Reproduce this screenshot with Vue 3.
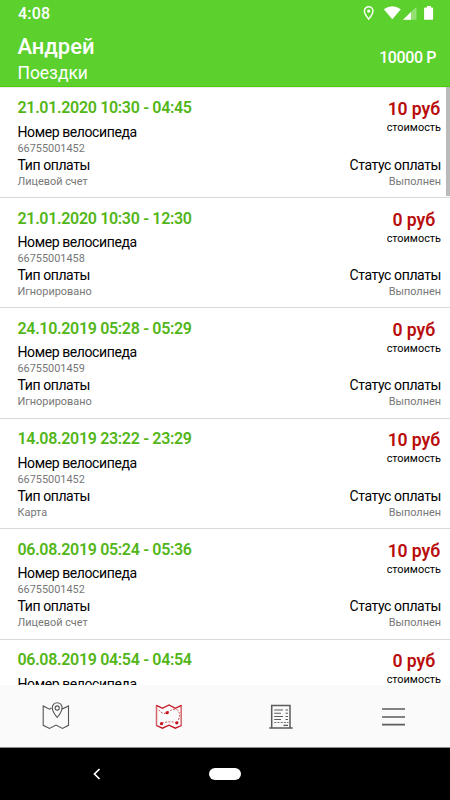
<script setup>
const trips = [
  { time: '21.01.2020 10:30 - 04:45', bike: '66755001452', payment: 'Лицевой счет', price: 10 },
  { time: '21.01.2020 10:30 - 12:30', bike: '66755001458', payment: 'Игнорировано', price: 0 },
  { time: '24.10.2019 05:28 - 05:29', bike: '66755001459', payment: 'Игнорировано', price: 0 },
  { time: '14.08.2019 23:22 - 23:29', bike: '66755001452', payment: 'Карта', price: 10 },
  { time: '06.08.2019 05:24 - 05:36', bike: '66755001452', payment: 'Лицевой счет', price: 10 },
]
const partial = { time: '06.08.2019 04:54 - 04:54', price: 0 }
</script>

<template>
  <div class="screen">
    <header class="header">
      <div class="status">
        <span class="clock">4:08</span>
        <svg class="status-icons" width="74" height="18" viewBox="0 0 74 18">
          <path d="M5.7 1.8a4.3 4.3 0 0 0-4.3 4.3c0 3.1 4.3 8 4.3 8s4.3-4.9 4.3-8a4.3 4.3 0 0 0-4.3-4.3z" fill="none" stroke="#fff" stroke-width="1.4" />
          <circle cx="5.7" cy="6.1" r="1.6" fill="#fff" />
          <path d="M20.8 4.3Q29.3-1.8 37.8 4.3L29.3 14.2z" fill="#fff" />
          <path d="M53.5 1.7V14.7H40z" fill="#fff" opacity=".35" />
          <path d="M48 7V14.7H40z" fill="#fff" />
          <path d="M62 2.4h2V1h4v1.4h1.2q.9 0 .9.9v10.6q0 .9-.9.9H62q-.9 0-.9-.9V3.3q0-.9.9-.9z" fill="#fff" />
        </svg>
      </div>
      <div class="heading">
        <div>
          <h1 class="name">Андрей</h1>
          <div class="subtitle">Поездки</div>
        </div>
        <div class="balance">10000 Р</div>
      </div>
    </header>

    <main class="list">
      <article v-for="trip in trips" :key="trip.time" class="trip">
        <div class="details">
          <div class="time">{{ trip.time }}</div>
          <div class="label">Номер велосипеда</div>
          <div class="value">{{ trip.bike }}</div>
          <div class="label">Тип оплаты</div>
          <div class="value">{{ trip.payment }}</div>
        </div>
        <div class="side">
          <div class="cost">
            <div class="price">{{ trip.price }} руб</div>
            <div class="caption">стоимость</div>
          </div>
          <div class="state">
            <div class="label">Статус оплаты</div>
            <div class="value">Выполнен</div>
          </div>
        </div>
      </article>
      <article class="trip">
        <div class="details">
          <div class="time">{{ partial.time }}</div>
          <div class="label">Номер велосипеда</div>
        </div>
        <div class="side">
          <div class="cost">
            <div class="price">{{ partial.price }} руб</div>
            <div class="caption">стоимость</div>
          </div>
        </div>
      </article>
      <div class="scrollbar"></div>
    </main>

    <nav class="tabs">
      <div class="tab">
        <svg width="30" height="30" viewBox="0 0 30 30" fill="none" stroke="#555" stroke-width="1.1">
          <path d="M10.5 7L8.5 8.2L2.2 5V24.3L8.5 27.5L15 24L21.5 27.5L27.5 24.3V5L21.7 7.8L20.8 7" />
          <path d="M16.2 1.8a4.9 4.9 0 0 0-4.9 4.9c0 3.8 4.9 9.8 4.9 9.8s4.9-6 4.9-9.8a4.9 4.9 0 0 0-4.9-4.9z" />
          <circle cx="16.2" cy="7" r="2.1" />
        </svg>
      </div>
      <div class="tab">
        <svg width="30" height="30" viewBox="0 0 30 30" fill="none" stroke="#c41420">
          <path d="M2.3 4.3L8.5 7.3L15 4L21.3 7.3L27.5 4.3M2.3 24.5L8.5 27.2L15 24.2L21.3 27.2L27.5 24.5" stroke-width="1.3" />
          <path d="M2.5 4.3V24.5M27.2 4.3V24.5" stroke-width="1.5" opacity=".65" />
          <path d="M4.8 8.8Q8 13.7 13.2 11.9Q19 6.7 23.6 9Q27.5 13 23.5 21M8 22.2Q15.5 19.5 22.5 22" stroke-width="1" stroke-dasharray="1.8 1.5" opacity=".8" />
          <g fill="#c41420" stroke="none">
            <circle cx="13.2" cy="11.7" r="1.6" />
            <circle cx="7.5" cy="22.7" r="1.6" />
            <circle cx="22.8" cy="21.8" r="1.6" />
          </g>
        </svg>
      </div>
      <div class="tab">
        <svg width="30" height="30" viewBox="0 0 30 30" fill="none" stroke="#5b5b5b">
          <path d="M5.7 27V4.5H24V27M3.3 27H26.7" stroke-width="1.5" />
          <path d="M8.2 9H17M19.5 9H22M8.2 12.3H15M19.5 12.3H22M8.2 15.5H17M19.5 15.5H22M8.2 18.5H15M19.5 18.5H22M17.5 24.4H22" stroke-width="1.1" />
          <path d="M8.2 21.5H22.5" stroke-width=".8" stroke-dasharray="2.2 1" />
        </svg>
      </div>
      <div class="tab">
        <svg width="30" height="30" viewBox="0 0 30 30" stroke="#5b5b5b" stroke-width="1.7">
          <path d="M3 8H26M3 16H26M3 23.7H26" />
        </svg>
      </div>
    </nav>

    <footer class="system">
      <svg class="back" width="8" height="12" viewBox="0 0 8 12" fill="none" stroke="#fff" stroke-width="1.7">
        <path d="M6.5 1L1.5 6L6.5 11" />
      </svg>
      <span class="home"></span>
    </footer>
  </div>
</template>

<style>
body {
  margin: 0;
}
</style>

<style scoped>
.screen {
  width: 450px;
  height: 800px;
  display: flex;
  flex-direction: column;
  overflow: hidden;
  background: #fff;
  color: #000;
  font-family: Roboto, sans-serif;
  white-space: nowrap;
}
.header {
  box-sizing: border-box;
  flex: none;
  height: 87px;
  background: #5cd02c;
  border-bottom: 1px solid #4dcc0c;
  color: #fff;
}
.status {
  display: flex;
  justify-content: space-between;
  height: 27px;
  padding: 5px 13px 0 18px;
  box-sizing: border-box;
}
.clock {
  font-size: 16px;
  line-height: 18px;
  font-weight: 500;
  letter-spacing: 0.2px;
}
.heading {
  display: flex;
  justify-content: space-between;
  padding: 7px 14px 0 17.5px;
}
.name {
  margin: 0;
  font-size: 22px;
  line-height: 26px;
  font-weight: 500;
  letter-spacing: -0.05px;
}
.subtitle {
  font-size: 17.5px;
  line-height: 26px;
  letter-spacing: -0.05px;
}
.balance {
  padding-top: 14px;
  font-size: 16px;
  line-height: 20px;
  font-weight: 500;
  letter-spacing: -0.4px;
}
.list {
  box-sizing: border-box;
  position: relative;
  height: 598px;
  padding-top: 0.6px;
  flex: none;
  overflow: hidden;
  box-shadow: inset 0 1px #ededed;
}
.trip {
  box-sizing: border-box;
  height: 110.4px;
  padding: 10.6px 9px 0 17.5px;
  display: flex;
  justify-content: space-between;
  border-bottom: 1px solid #d9d9d9;
}
.time {
  color: #53b618;
  font-size: 16px;
  line-height: 20px;
  font-weight: 600;
  letter-spacing: -0.32px;
  margin-bottom: 5.4px;
}
.label {
  font-size: 14px;
  line-height: 17px;
  letter-spacing: -0.4px;
}
.value {
  color: #777;
  font-size: 10.9px;
  line-height: 16px;
}
.side {
  display: flex;
  flex-direction: column;
  align-items: flex-end;
}
.cost {
  text-align: center;
}
.price {
  color: #b90d0d;
  font-size: 17.6px;
  line-height: 22px;
  font-weight: 600;
  letter-spacing: -0.1px;
}
.caption {
  font-size: 10.9px;
  line-height: 16px;
}
.state {
  margin-top: 20.4px;
  text-align: right;
}
.scrollbar {
  position: absolute;
  top: 0;
  right: 0;
  width: 4.5px;
  height: 109px;
  background: #bababa;
}
.tabs {
  flex: none;
  height: 62px;
  display: flex;
  background: #fafafa;
}
.tab {
  flex: 1;
  display: flex;
  align-items: center;
  justify-content: center;
}
.system {
  flex: 1;
  background: #000;
  border-top: 1px solid #8a8a8a;
  display: flex;
  align-items: center;
}
.back {
  margin-left: 93px;
}
.home {
  width: 32px;
  height: 12px;
  border-radius: 6px;
  background: #fff;
  margin-left: 108px;
}
</style>
